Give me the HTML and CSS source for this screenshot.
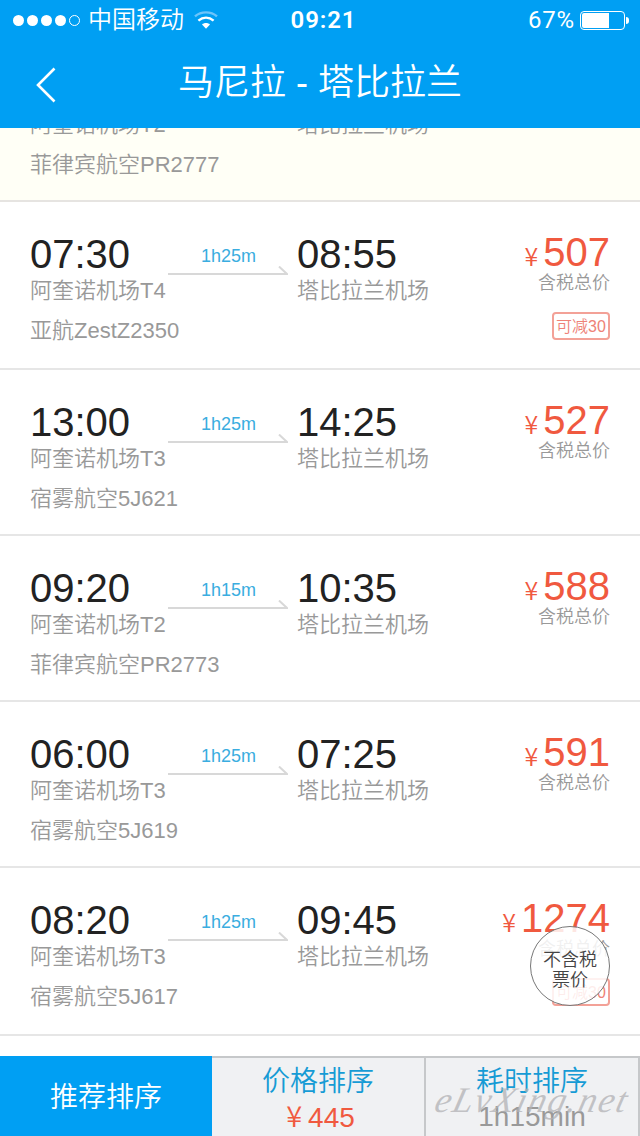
FILE: index.html
```
<!DOCTYPE html>
<html lang="zh-CN">
<head>
  <meta charset="UTF-8" />
  <meta name="viewport" content="width=device-width, initial-scale=1.0" />
  <title>马尼拉 - 塔比拉兰</title>
  <link rel="stylesheet" href="styles.css">
</head>
<body>
  <header>
    <div class="status-bar">
      <div class="status-left">
        <div class="signal"><i></i><i></i><i></i><i></i><i class="empty"></i></div>
        <span class="carrier">中国移动</span>
        <svg class="wifi" width="24" height="18" viewBox="0 0 24 18" fill="none" stroke="#fff" stroke-width="2.4">
          <path d="M1 5.4C7 0 17 0 23 5.4" stroke="#6cc4fa" />
          <path d="M4.4 9.6C9 5.6 15 5.6 19.6 9.6" />
          <path d="M12 17.8L8 13.6C10 11.6 14 11.6 16 13.6Z" fill="#fff" stroke="none" />
        </svg>
      </div>
      <span class="clock">09:21</span>
      <div class="status-right">
        <span class="percent">67%</span>
        <div class="battery"><div class="level"></div></div>
        <div class="battery-tip"></div>
      </div>
    </div>
    <nav>
      <svg class="back" width="20" height="36" viewBox="0 0 20 36" fill="none" stroke="#fff" stroke-width="2.6">
        <path d="M18.5 1.5L2 18L18.5 34.5" />
      </svg>
      <h1>马尼拉 - 塔比拉兰</h1>
    </nav>
  </header>

  <main>
    <section class="flight visited">
      <div class="from">
        <div class="airport">阿奎诺机场T2</div>
        <div class="airline">菲律宾航空PR2777</div>
      </div>
      <div class="to">
        <div class="airport">塔比拉兰机场</div>
      </div>
    </section>

    <section class="flight has-coupon">
      <div class="from">
        <div class="time">07:30</div>
        <div class="airport">阿奎诺机场T4</div>
        <div class="airline">亚航ZestZ2350</div>
      </div>
      <div class="duration">1h25m
        <svg width="120" height="10" viewBox="0 0 120 10"><path d="M0 8H119L111 .5" /></svg>
      </div>
      <div class="to">
        <div class="time">08:55</div>
        <div class="airport">塔比拉兰机场</div>
      </div>
      <div class="cost">
        <div class="price"><small>¥</small>507</div>
        <div class="tax">含税总价</div>
        <div class="coupon">可减30</div>
      </div>
    </section>

    <section class="flight">
      <div class="from">
        <div class="time">13:00</div>
        <div class="airport">阿奎诺机场T3</div>
        <div class="airline">宿雾航空5J621</div>
      </div>
      <div class="duration">1h25m
        <svg width="120" height="10" viewBox="0 0 120 10"><path d="M0 8H119L111 .5" /></svg>
      </div>
      <div class="to">
        <div class="time">14:25</div>
        <div class="airport">塔比拉兰机场</div>
      </div>
      <div class="cost">
        <div class="price"><small>¥</small>527</div>
        <div class="tax">含税总价</div>
      </div>
    </section>

    <section class="flight">
      <div class="from">
        <div class="time">09:20</div>
        <div class="airport">阿奎诺机场T2</div>
        <div class="airline">菲律宾航空PR2773</div>
      </div>
      <div class="duration">1h15m
        <svg width="120" height="10" viewBox="0 0 120 10"><path d="M0 8H119L111 .5" /></svg>
      </div>
      <div class="to">
        <div class="time">10:35</div>
        <div class="airport">塔比拉兰机场</div>
      </div>
      <div class="cost">
        <div class="price"><small>¥</small>588</div>
        <div class="tax">含税总价</div>
      </div>
    </section>

    <section class="flight">
      <div class="from">
        <div class="time">06:00</div>
        <div class="airport">阿奎诺机场T3</div>
        <div class="airline">宿雾航空5J619</div>
      </div>
      <div class="duration">1h25m
        <svg width="120" height="10" viewBox="0 0 120 10"><path d="M0 8H119L111 .5" /></svg>
      </div>
      <div class="to">
        <div class="time">07:25</div>
        <div class="airport">塔比拉兰机场</div>
      </div>
      <div class="cost">
        <div class="price"><small>¥</small>591</div>
        <div class="tax">含税总价</div>
      </div>
    </section>

    <section class="flight has-coupon">
      <div class="from">
        <div class="time">08:20</div>
        <div class="airport">阿奎诺机场T3</div>
        <div class="airline">宿雾航空5J617</div>
      </div>
      <div class="duration">1h25m
        <svg width="120" height="10" viewBox="0 0 120 10"><path d="M0 8H119L111 .5" /></svg>
      </div>
      <div class="to">
        <div class="time">09:45</div>
        <div class="airport">塔比拉兰机场</div>
      </div>
      <div class="cost">
        <div class="price"><small>¥</small>1274</div>
        <div class="tax">含税总价</div>
        <div class="coupon">可减30</div>
      </div>
    </section>
  </main>

  <button class="tax-toggle">不含税<br>票价</button>

  <footer>
    <div class="tab active">推荐排序</div>
    <div class="tab">价格排序<span class="lowest"><small>¥</small>445</span></div>
    <div class="tab">耗时排序<span class="shortest">1h15min</span></div>
    <div class="watermark">eLvXing.net</div>
  </footer>
</body>
</html>
```
FILE: styles.css
```
* {
  box-sizing: border-box;
}

body {
  margin: 0;
  width: 640px;
  height: 1136px;
  position: relative;
  overflow: hidden;
  display: flex;
  flex-direction: column;
  background: #fff;
  font-family: "Liberation Sans", "Noto Sans CJK SC", sans-serif;
  font-weight: 350;
}

header {
  height: 128px;
  flex: none;
  background: #009ff3;
  color: #fff;
}

/* status bar */
.status-bar {
  height: 40px;
  display: grid;
  grid-template-columns: 1fr auto 1fr;
  align-items: center;
  padding: 0 11px 0 13px;
  font-family: Roboto, "Noto Sans CJK SC", sans-serif;
  font-size: 24px;
  line-height: 40px;
}

.status-left,
.status-right,
.signal {
  display: flex;
  align-items: center;
}

.signal {
  gap: 3px;
}

.signal i {
  width: 11px;
  height: 11px;
  border-radius: 50%;
  background: #fff;
}

.signal .empty {
  background: none;
  border: 1px solid #fff;
}

.carrier {
  margin: 0 10px 0 8px;
}

.clock {
  margin-left: 5px;
  font-weight: 600;
  font-size: 24px;
  letter-spacing: 0.9px;
}

.status-right {
  justify-content: flex-end;
  font-size: 24px;
}

.percent {
  font-weight: 400;
  letter-spacing: 0.8px;
}

.battery {
  width: 45px;
  height: 19px;
  margin-left: 5px;
  padding: 1px;
  border: 1px solid #fff;
  border-radius: 4px;
}

.level {
  width: 27px;
  height: 15px;
  background: #fff;
  border-radius: 2px 0 0 2px;
}

.battery-tip {
  width: 3px;
  height: 7px;
  margin-left: 1px;
  background: #fff;
  border-radius: 0 3px 3px 0;
}

/* title */
nav {
  height: 88px;
  display: grid;
  grid-template-columns: 56px 1fr 56px;
  align-items: center;
}

.back {
  justify-self: end;
  margin-top: 1px;
}

h1 {
  margin: 0 0 10px;
  font-size: 36px;
  font-weight: 350;
  text-align: center;
}

/* flight list */
main {
  flex: 1;
  overflow: hidden;
}

.flight {
  height: 166px;
  display: grid;
  grid-template-columns: 138px 120px 1fr auto;
  padding: 32px 30px 0;
  border-bottom: 2px solid #e6e6e6;
}

.has-coupon {
  height: 168px;
}

.visited {
  height: 74px;
  grid-template-columns: 267px 1fr;
  padding-top: 0;
  background: #fffff6;
  border-color: #e6e4e1;
  overflow: hidden;
}

.visited .from,
.visited .to {
  margin-top: -20px;
}

.from {
  white-space: nowrap;
}

.flight .to {
  padding-left: 9px;
}

.visited .to {
  padding-left: 0;
}

.time {
  font-size: 40px;
  line-height: 40px;
  color: #222;
}

.airport,
.airline {
  padding-top: 1px;
  font-size: 22px;
  line-height: 32px;
  color: #999;
}

.airline {
  margin-top: 7px;
}

.duration {
  padding: 12px 0 0 1px;
  font-size: 18px;
  line-height: 20px;
  color: #3aade0;
  text-align: center;
}

.duration svg {
  display: block;
  margin-left: -1px;
}

.duration path {
  fill: none;
  stroke: #d8d8d8;
  stroke-width: 2;
}

.cost {
  display: flex;
  flex-direction: column;
  align-items: flex-end;
  margin-top: -2px;
}

.price {
  height: 41px;
  font-size: 40px;
  line-height: 40px;
  color: #f0593f;
}

.price small {
  margin-right: 5px;
  font-family: "Noto Sans CJK SC", sans-serif;
  font-size: 25px;
  line-height: 1;
}

.tax {
  font-size: 18px;
  line-height: 20px;
  color: #999;
}

.coupon {
  width: 58px;
  height: 28px;
  margin-top: 19px;
  border: 2px solid #f3a197;
  border-radius: 4px;
  font-size: 16px;
  line-height: 25px;
  color: #ee8277;
  text-align: center;
}

.tax-toggle {
  position: absolute;
  right: 30px;
  bottom: 130px;
  width: 80px;
  height: 80px;
  padding: 8px 0 0;
  border: 1px solid #777;
  border-radius: 50%;
  background: rgba(255, 255, 255, 0.85);
  color: #444;
  font: inherit;
  font-size: 18px;
  line-height: 20px;
}

/* sort tabs */
footer {
  position: relative;
  height: 80px;
  flex: none;
  display: grid;
  grid-template-columns: 212px 214px 214px;
}

.tab {
  display: flex;
  flex-direction: column;
  align-items: center;
  padding-top: 6px;
  background: #f0f1f3;
  border-top: 2px solid #c6c8ca;
  border-right: 2px solid #c6c8ca;
  color: #169bd5;
  font-size: 28px;
  line-height: 36px;
}

.tab.active {
  justify-content: center;
  padding: 3px 0 0;
  border: none;
  background: #009ff3;
  color: #fff;
}

.lowest,
.shortest {
  height: 34px;
  line-height: 34px;
}

.lowest {
  padding-left: 5px;
  color: #f0593f;
}

.lowest small {
  margin-right: 6px;
  font-family: "Noto Sans CJK SC", sans-serif;
  font-size: 29px;
  line-height: 1;
}

.shortest {
  color: #999;
}

.watermark {
  position: absolute;
  right: 11px;
  top: 24px;
  font-family: "Liberation Serif", serif;
  font-style: italic;
  font-size: 36px;
  line-height: 40px;
  letter-spacing: 1.8px;
  color: rgba(178, 178, 181, 0.75);
  transform: skewX(-14deg);
}
```
